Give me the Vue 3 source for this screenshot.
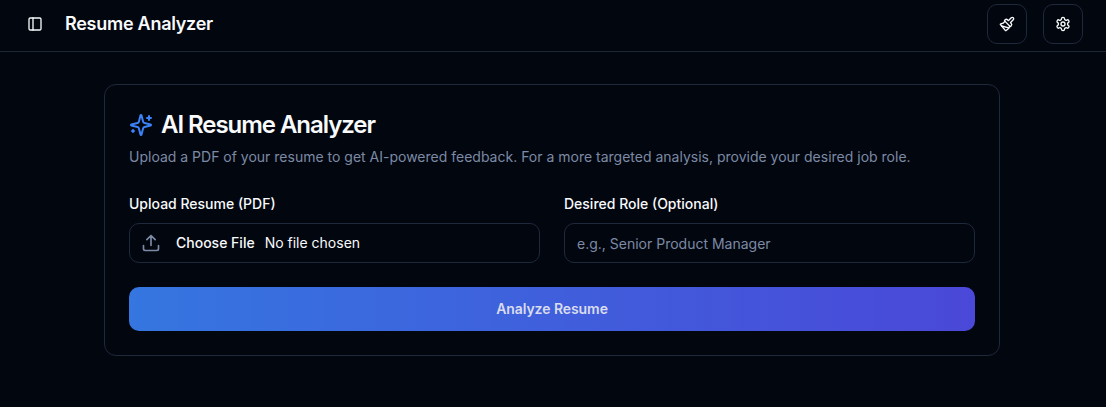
<script setup>
</script>

<template>
  <div class="page">
    <header class="topbar">
      <svg class="icon panel" viewBox="0 0 24 24"><rect x="3" y="3" width="18" height="18" rx="2" /><path d="M9 3v18" /></svg>
      <h1>Resume Analyzer</h1>
      <div class="actions">
        <button class="square" aria-label="Theme">
          <svg class="icon" viewBox="0 0 24 24"><path d="m14.622 17.897-10.68-2.913" /><path d="M18.376 2.622a1 1 0 1 1 3.002 3.002L17.36 9.643a.5.5 0 0 0 0 .707l.944.944a2.41 2.41 0 0 1 0 3.408l-.944.944a.5.5 0 0 1-.707 0L8.354 7.348a.5.5 0 0 1 0-.707l.944-.944a2.41 2.41 0 0 1 3.408 0l.944.944a.5.5 0 0 0 .707 0z" /><path d="M9 8c-1.804 2.71-3.97 3.46-6.583 3.948a.507.507 0 0 0-.302.819l7.32 8.883a1 1 0 0 0 1.185.204C12.735 20.405 16 16.792 16 15" /></svg>
        </button>
        <button class="square" aria-label="Settings">
          <svg class="icon" viewBox="0 0 24 24"><path d="M12.22 2h-.44a2 2 0 0 0-2 2v.18a2 2 0 0 1-1 1.73l-.43.25a2 2 0 0 1-2 0l-.15-.08a2 2 0 0 0-2.73.73l-.22.38a2 2 0 0 0 .73 2.73l.15.1a2 2 0 0 1 1 1.72v.51a2 2 0 0 1-1 1.74l-.15.09a2 2 0 0 0-.73 2.73l.22.38a2 2 0 0 0 2.73.73l.15-.08a2 2 0 0 1 2 0l.43.25a2 2 0 0 1 1 1.73V20a2 2 0 0 0 2 2h.44a2 2 0 0 0 2-2v-.18a2 2 0 0 1 1-1.73l.43-.25a2 2 0 0 1 2 0l.15.08a2 2 0 0 0 2.73-.73l.22-.39a2 2 0 0 0-.73-2.73l-.15-.08a2 2 0 0 1-1-1.74v-.5a2 2 0 0 1 1-1.74l.15-.09a2 2 0 0 0 .73-2.73l-.22-.38a2 2 0 0 0-2.73-.73l-.15.08a2 2 0 0 1-2 0l-.43-.25a2 2 0 0 1-1-1.73V4a2 2 0 0 0-2-2z" /><circle cx="12" cy="12" r="3" /></svg>
        </button>
      </div>
    </header>
    <main class="card">
      <div class="heading">
        <svg class="icon sparkles" viewBox="0 0 24 24"><path d="M9.937 15.5A2 2 0 0 0 8.5 14.063l-6.135-1.582a.5.5 0 0 1 0-.962L8.5 9.936A2 2 0 0 0 9.937 8.5l1.582-6.135a.5.5 0 0 1 .963 0L14.063 8.5A2 2 0 0 0 15.5 9.937l6.135 1.581a.5.5 0 0 1 0 .964L15.5 14.063a2 2 0 0 0-1.437 1.437l-1.582 6.135a.5.5 0 0 1-.963 0z" /><path d="M20 3v4M22 5h-4M4 17v2M5 18H3" /></svg>
        <h2>AI Resume Analyzer</h2>
      </div>
      <p class="description">Upload a PDF of your resume to get AI-powered feedback. For a more targeted analysis, provide your desired job role.</p>
      <div class="fields">
        <div class="field">
          <div class="label">Upload Resume (PDF)</div>
          <div class="control file">
            <svg class="icon upload" viewBox="0 0 24 24"><path d="M21 15v4a2 2 0 0 1-2 2H5a2 2 0 0 1-2-2v-4M17 8l-5-5-5 5M12 3v12" /></svg>
            <span class="choose">Choose File</span><span class="filename">No file chosen</span>
          </div>
        </div>
        <div class="field">
          <div class="label">Desired Role (Optional)</div>
          <div class="control"><span class="placeholder">e.g., Senior Product Manager</span></div>
        </div>
      </div>
      <button class="submit">Analyze Resume</button>
    </main>
  </div>
</template>

<style>
body { background: #02060f; }
</style>

<style scoped>
* { box-sizing: border-box; margin: 0; }
.page { height: 407px; overflow: hidden; background: #02060f; color: #f8fafc; font-family: Inter, "Liberation Sans", sans-serif; font-size: 14px; }
.topbar { display: flex; align-items: center; height: 52px; padding: 0 23px 4px 27px; border-bottom: 1px solid #1e2535; }
.icon { display: block; flex: none; width: 16px; height: 16px; fill: none; stroke: currentColor; stroke-width: 2; stroke-linecap: round; stroke-linejoin: round; }
h1 { margin-left: 22px; font-size: 18px; line-height: 28px; font-weight: 600; letter-spacing: -0.27px; white-space: nowrap; }
.actions { display: flex; gap: 16px; margin-left: auto; }
.square { display: grid; place-items: center; width: 40px; height: 40px; padding: 0; border: 1px solid #1e293b; border-radius: 10px; background: transparent; color: #f8fafc; }
.card { width: 896px; height: 272px; margin: 32px 0 0 104px; padding: 24px; border: 1px solid #1e293b; border-radius: 12px; }
.heading { display: flex; align-items: center; gap: 8px; height: 32px; }
.sparkles { width: 24px; height: 24px; color: #3b82f6; }
h2 { font-size: 24px; line-height: 32px; font-weight: 600; letter-spacing: -1.05px; white-space: nowrap; }
.description { margin-top: 6px; line-height: 20px; color: #7c8aa5; white-space: nowrap; }
.fields { display: grid; grid-template-columns: 1fr 1fr; gap: 24px; margin-top: 30px; }
.label { line-height: 14px; font-weight: 500; }
.control { display: flex; align-items: center; height: 40px; margin-top: 12px; padding: 0 12px; border: 1px solid #1e293b; border-radius: 10px; white-space: nowrap; }
.upload { width: 20px; height: 20px; margin-left: -1px; color: #7c8aa5; }
.choose { margin-left: 15px; font-weight: 500; }
.file span { padding-bottom: 2px; }
.filename { margin-left: 10px; }
.placeholder { color: #7c8aa5; }
.submit { display: block; width: 100%; height: 44px; margin-top: 24px; padding: 0 0 2px; border: 0; border-radius: 10px; background: linear-gradient(to right, #3576e0, #4a48d8); color: #d9dcee; font: 600 14px Inter, sans-serif; letter-spacing: -0.07px; }
</style>
